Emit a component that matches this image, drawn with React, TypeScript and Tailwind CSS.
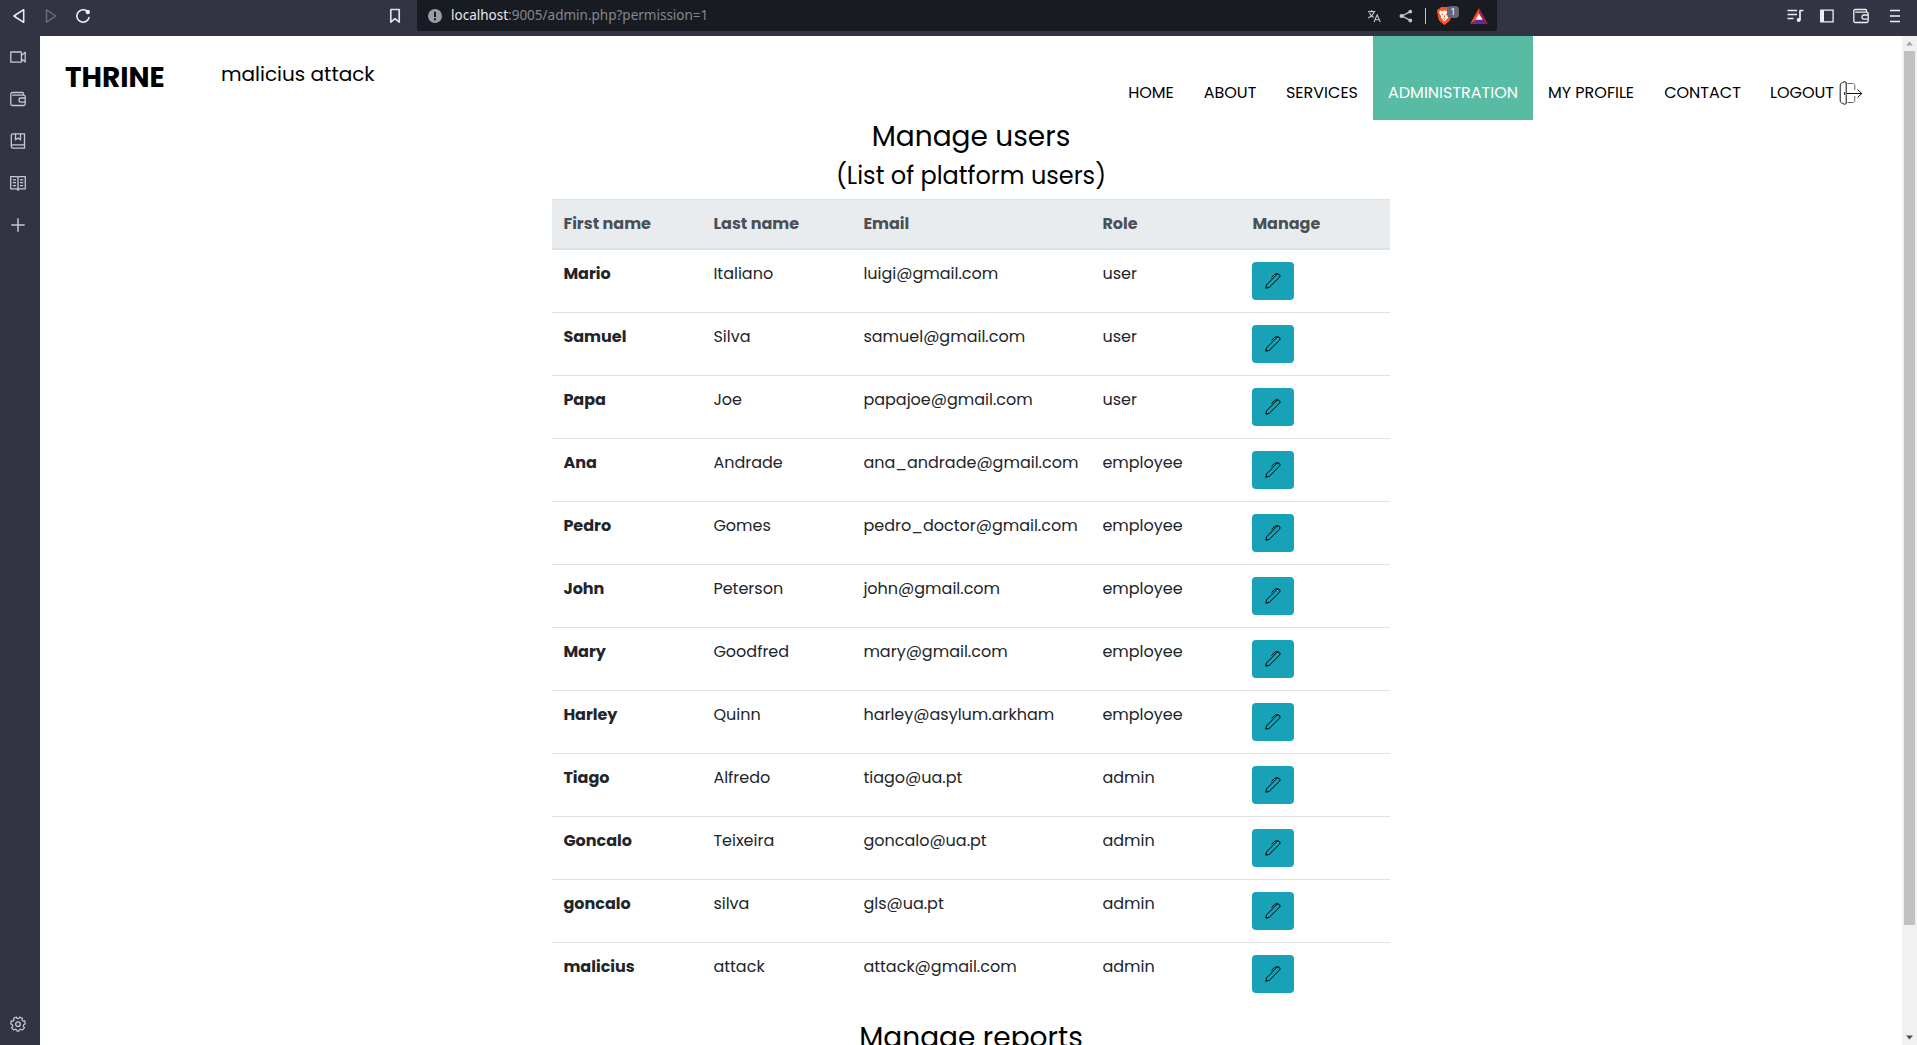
import React from "react";

const users = [
  ["Mario", "Italiano", "luigi@gmail.com", "user"],
  ["Samuel", "Silva", "samuel@gmail.com", "user"],
  ["Papa", "Joe", "papajoe@gmail.com", "user"],
  ["Ana", "Andrade", "ana_andrade@gmail.com", "employee"],
  ["Pedro", "Gomes", "pedro_doctor@gmail.com", "employee"],
  ["John", "Peterson", "john@gmail.com", "employee"],
  ["Mary", "Goodfred", "mary@gmail.com", "employee"],
  ["Harley", "Quinn", "harley@asylum.arkham", "employee"],
  ["Tiago", "Alfredo", "tiago@ua.pt", "admin"],
  ["Goncalo", "Teixeira", "goncalo@ua.pt", "admin"],
  ["goncalo", "silva", "gls@ua.pt", "admin"],
  ["malicius", "attack", "attack@gmail.com", "admin"],
];

const line = {
  width: 16,
  height: 16,
  viewBox: "0 0 16 16",
  fill: "none",
  stroke: "currentColor",
  strokeWidth: 1.3,
  strokeLinejoin: "round" as const,
};

function Pen() {
  return (
    <svg {...line} strokeWidth={1}>
      <path d="M.8 15.200 1.600 11.800 11.800 1.500a2 2 0 0 1 2.700 0l0 0a2 2 0 0 1 0 2.700L4.200 14.400zM6.500 4.500l3-3c.5-.5 1-.7 1.600-.6h2" />
    </svg>
  );
}

function Wallet() {
  return (
    <svg {...line}>
      <path d="M2.200 4.200h11.200c1.200 0 1.800.6 1.800 1.600v7c0 1-.6 1.700-1.700 1.700h-11c-1 0-1.700-.6-1.700-1.600V3.200c0-1 .5-1.700 1.500-1.700h10.200c.7 0 1 .5 1 1.200v1.500M15.200 7h-4.400C9.600 7 9 8 9 9.100s.7 2 1.800 2h4.400z" />
    </svg>
  );
}

function TopBar() {
  return (
    <header className="flex h-9 shrink-0 bg-[#323443] text-[#dfe0e6]">
      <div className="flex h-[31px] w-[417px] shrink-0 items-center">
        <svg {...line} className="ml-[11px] text-[#eeeef2]">
          <path d="M12.700 1.700v12.600L2.900 8z" strokeWidth="1.500" />
        </svg>
        <svg {...line} className="ml-[17px] text-[#6d6f7c]">
          <path d="M2.500 1.800v12.400L11.800 8z" strokeWidth="1.400" />
        </svg>
        <svg {...line} className="ml-[15px] text-[#eeeef2]">
          <path d="M11.800 3A6.200 6.200 0 1 0 14.200 9" strokeWidth="1.600" />
          <circle cx="12.800" cy="4" r="2.200" fill="currentColor" stroke="none" />
        </svg>
        <svg {...line} className="ml-[296px]">
          <path d="M3.800 1.500h8.400v12.600L8 10.700l-4.200 3.400z" strokeWidth="1.700" />
        </svg>
      </div>
      <div className="flex h-[31px] w-[1080px] shrink-0 items-center rounded-b-[3px] bg-[#181b22]">
        <svg width="14" height="14" viewBox="0 0 14 14" className="ml-[11px]">
          <circle cx="7" cy="7" r="7" fill="#9a9da9" />
          <path d="M7 2.700v5.200M7 9.300v2" stroke="#181b22" strokeWidth="2" />
        </svg>
        <p className="ml-[9px] w-[800px] pb-0.5 font-['Noto_Sans',sans-serif] text-[13.5px] leading-5 whitespace-nowrap text-[#85878d]">
          <span className="text-[#e8e8ec]">localhost</span>:9005/admin.php?permission=1
        </p>
        <div className="ml-auto flex items-center text-[#c3c4cb]">
          <svg {...line} width={14} height={14} strokeWidth={1.300}>
            <path d="M1 3h8.500M5.200 1v2M8 3c-.6 3-3 5.600-6.800 7.300M2.700 4.600C4 7 5.600 8.600 7.600 9.700M8 15l3.600-8.500L15.200 15M9.200 12.300H14" />
          </svg>
          <svg width="14" height="14" viewBox="0 0 14 14" className="ml-[18px]" fill="currentColor">
            <path d="M11.300 2.700 3 7l8.300 4.400" fill="none" stroke="currentColor" strokeWidth="1.400" />
            <circle cx="11.300" cy="2.600" r="1.900" />
            <circle cx="2.600" cy="7" r="2.100" />
            <circle cx="11.300" cy="11.500" r="1.900" />
          </svg>
          <span className="ml-3 h-4 w-px bg-[#c3c4cb]" />
          <div className="relative ml-[11px] h-[18px] w-6">
            <svg width="15" height="18" viewBox="0 0 15 18">
              <path d="M4 0h7l1.500 1.800 1.700.2.800 2.300-1.700 8.200c-.3 1.300-3.800 4-5.800 5.500C5.500 16.500 2 13.800 1.700 12.500L0 4.300.8 2l1.700-.2z" fill="#fb5422" />
              <path d="m3 3.600 2.300.4 2.200-.6L9.700 4l2.300-.4 1 2-2.200 3.800.3 1.400-3.600 3.800-3.600-3.800.3-1.400L2 5.600z" fill="#fff" />
              <path d="m3.800 6.300 2.400.7-.5 1.600zM11.200 6.300 8.800 7l.5 1.600zM7.500 7l.6 3-.6.700-.6-.7zM5.600 11l1.900.8 1.900-.8-1.900 2z" fill="#fb5422" />
            </svg>
            <span className="absolute -top-px left-[10px] flex h-3 w-3 items-center justify-center rounded-[4px] bg-[#646876] font-['Noto_Sans',sans-serif] text-[9px] text-white">
              1
            </span>
          </div>
          <svg width="18" height="16" viewBox="0 0 18 16" className="mr-[9px] ml-[9px]">
            <path d="M9 0 0 16l9-5.500z" fill="#ff4724" />
            <path d="m9 0 9 16-9-5.500z" fill="#9e1f63" />
            <path d="M0 16h18l-9-5.500z" fill="#662d91" />
            <path d="m9 5.500 3.600 6.300H5.400z" fill="#fff" />
          </svg>
        </div>
      </div>
      <div className="flex h-[31px] flex-1 items-center justify-end text-[#eeeef2]">
        <svg {...line} width={17} strokeWidth={1.700}>
          <path d="M0 2.500h9.500M0 6.500h9.500M0 10.500h6M12.500 12V2.500H16" />
          <circle cx="11.200" cy="12" r="2" fill="currentColor" stroke="none" />
        </svg>
        <svg width="14" height="14" viewBox="0 0 14 14" className="ml-4">
          <path d="M.7 1.200h12.400v11.600H.7z" fill="none" stroke="currentColor" strokeWidth="1.300" />
          <path d="M.7 1.200h3.300v11.600H.7z" fill="currentColor" />
        </svg>
        <span className="ml-[19px]">
          <Wallet />
        </span>
        <svg width="10" height="14" viewBox="0 0 10 14" className="mr-[17px] ml-[21px]">
          <path d="M0 1.500h10M0 7h10M0 12.500h10" stroke="currentColor" strokeWidth="1.600" />
        </svg>
      </div>
    </header>
  );
}

function SideBar() {
  return (
    <aside className="flex w-10 shrink-0 flex-col items-center bg-[#323443] pt-[13px] pr-1 text-[#c6c8d2]">
      <svg {...line}>
        <path d="M.8 3h10.600v10.200H.8zM11.400 6.500l3.800-3.200v9.600l-3.800-3.200" />
      </svg>
      <span className="mt-[26px]">
        <Wallet />
      </span>
      <svg {...line} className="mt-[26px]">
        <path d="M14.500 11.800V.8H3C1.900.8 1.300 1.500 1.300 2.500v11c0 1 .6 1.700 1.700 1.700h11.500v-3.400H3c-1.100 0-1.700.6-1.700 1.600M5.500.8v6L8 5l2.500 1.800v-6" />
      </svg>
      <svg {...line} className="mt-[26px]">
        <path d="M8 2.300V16M.7 1.600H7l1 .7 1-.7h6.300v12.200H9l-1 .7-1-.7H.7zM2.800 4.800H6M2.800 7.700H6M2.800 10.600H6M10 4.800h3.200M10 7.700h3.200M10 10.600h3.200" />
      </svg>
      <svg {...line} className="mt-[26px]" strokeWidth={1.500}>
        <path d="M8 1.300v13.400M1.300 8h13.400" />
      </svg>
      <svg {...line} className="mt-auto mb-[13px]">
        <path d="m6.300 1 .5 1.300h2.400L9.700 1l2.700 1.300-.5 1.600 1.200 1.300 1.700-.3.400 3-1.600.8-.3 1.700 1.200 1.300-2 2.200-1.700-.7-1.400.7-.6 1.300H7.200l-.6-1.300-1.400-.7-1.700.7-2-2.200 1.200-1.300-.3-1.700L.8 7.900l.4-3 1.700.3 1.200-1.300-.5-1.600z" strokeWidth="1.200" />
        <circle cx="8" cy="8.200" r="2.300" />
      </svg>
    </aside>
  );
}

function Nav() {
  const item = "flex h-full items-center justify-center pt-[30px]";
  return (
    <div className="flex h-[84px] shrink-0 text-black">
      <div className="ml-[25px] w-[156px] pt-[22px] text-[28px] leading-10 font-bold">THRINE</div>
      <div className="pt-[22px] text-[20px] leading-8">malicius attack</div>
      <nav className="mr-[25px] ml-auto flex text-[16px]">
        <a className={`${item} w-[76px]`}>HOME</a>
        <a className={`${item} w-[82px]`}>ABOUT</a>
        <a className={`${item} w-[102px]`}>SERVICES</a>
        <a className={`${item} w-[160px] bg-[#58bca5] text-white`}>ADMINISTRATION</a>
        <a className={`${item} w-[116px]`}>MY PROFILE</a>
        <a className={`${item} w-[107px]`}>CONTACT</a>
        <a className={`${item} w-[121px] gap-[5px]`}>
          LOGOUT
          <svg width="24" height="24" viewBox="0 0 24 24" fill="none" stroke="#111" strokeWidth="1">
            <path d="M3.500 1.500 5.500.7Q7.200.7 7.200 2V22q0 1.300-1.700 1.300l-2-1C1.900 21.800 1.200 21 1.200 19V5c0-2 .7-3 2.300-3.500z" />
            <path d="M8.500 2.500h5c1.600 0 2.300.7 2.300 2.200V9M8.500 21.500h5c1.600 0 2.300-.7 2.300-2.200V15" stroke="#666" />
            <path d="M8 12.500h14.700M18.500 8.500l4.300 4-4.300 4M5.500 11.200v2.600" />
          </svg>
        </a>
      </nav>
    </div>
  );
}

export default function App() {
  return (
    <div className="flex h-[1045px] w-[1917px] flex-col overflow-hidden bg-white font-[Poppins,Inter,sans-serif]">
      <TopBar />
      <div className="flex min-h-0 flex-1">
        <SideBar />
        <main className="flex min-w-0 flex-1 flex-col overflow-hidden">
          <Nav />
          <h3 className="h-[34px] shrink-0 text-center text-[28px] leading-[34px] text-black">
            Manage users
          </h3>
          <h4 className="mt-[7px] mb-[9px] h-[29px] shrink-0 text-center text-[24px] leading-[29px] text-black">
            (List of platform users)
          </h4>
          <table className="mx-auto w-[838px] shrink-0 table-fixed border-separate border-spacing-0 text-left text-[16px] leading-6 text-[#212529]">
            <colgroup>
              <col className="w-[150px]" />
              <col className="w-[150px]" />
              <col className="w-[239px]" />
              <col className="w-[150px]" />
              <col className="w-[149px]" />
            </colgroup>
            <thead className="bg-[#e9ecef] text-[#495057]">
              <tr className="h-[51px]">
                {["First name", "Last name", "Email", "Role", "Manage"].map((h) => (
                  <th key={h} className="border-t border-b-2 border-[#dee2e6] px-[11.4px] py-0 font-bold">
                    {h}
                  </th>
                ))}
              </tr>
            </thead>
            <tbody>
              {users.map(([first, last, email, role], i) => {
                const cell = `px-[11.4px] pt-3 pb-0 align-top ${i < users.length - 1 ? "border-b border-[#dee2e6]" : ""}`;
                return (
                  <tr key={email} className="h-[63px]">
                    <th className={`${cell} font-bold`}>{first}</th>
                    <td className={cell}>{last}</td>
                    <td className={`${cell} whitespace-nowrap`}>{email}</td>
                    <td className={cell}>{role}</td>
                    <td className={cell}>
                      <button className="flex h-[38px] w-[42px] items-center justify-center rounded-[4px] bg-[#17a2b8] text-black">
                        <Pen />
                      </button>
                    </td>
                  </tr>
                );
              })}
            </tbody>
          </table>
          <h3 className="mt-[15px] shrink-0 text-center text-[28px] leading-[34px] text-black">
            Manage reports
          </h3>
        </main>
        <div className="flex w-[15px] shrink-0 flex-col items-center bg-[#f1f1f1]">
          <svg width="15" height="15" viewBox="0 0 15 15">
            <path d="m7.500 5.500 3.500 4H4z" fill="#a3a3a3" />
          </svg>
          <div className="h-[874px] w-[11px] bg-[#c1c1c1]" />
          <svg width="15" height="15" viewBox="0 0 15 15" className="mt-auto">
            <path d="M4 5.500h7l-3.500 4z" fill="#505050" />
          </svg>
        </div>
      </div>
    </div>
  );
}
